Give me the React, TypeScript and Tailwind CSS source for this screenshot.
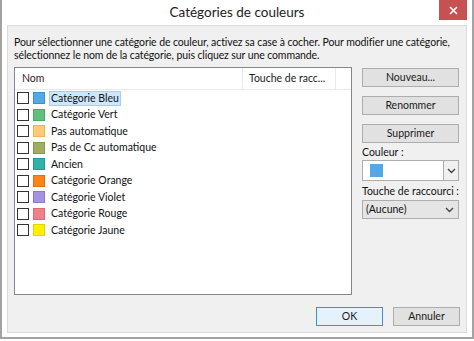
import React from "react";

const categories = [
  { name: "Catégorie Bleu", color: "#55a8e6", border: "#3f8fd0", selected: true },
  { name: "Catégorie Vert", color: "#62c07c", border: "#4ea867" },
  { name: "Pas automatique", color: "#ffc978", border: "#efb35c" },
  { name: "Pas de Cc automatique", color: "#a0ae62", border: "#8a984e" },
  { name: "Ancien", color: "#32b3aa", border: "#229a92" },
  { name: "Catégorie Orange", color: "#fe8419", border: "#e7700a" },
  { name: "Catégorie Violet", color: "#a592e0", border: "#8c78cc" },
  { name: "Catégorie Rouge", color: "#f2808a", border: "#dc6a74" },
  { name: "Catégorie Jaune", color: "#fff000", border: "#e6d400" },
];

const font = { fontFamily: 'Lato, "Noto Sans", sans-serif' };

function Btn({ children, primary }: { children: React.ReactNode; primary?: boolean }) {
  return (
    <button
      className={
        primary
          ? "h-[19px] w-[67px] border border-[#3c8fdc] bg-[#e5f1fb] text-[10.5px] leading-none text-[#1a1a1a]"
          : "h-[19px] w-[67px] border border-[#adadad] bg-[#e1e1e1] text-[10.5px] leading-none text-[#1a1a1a]"
      }
    >
      {children}
    </button>
  );
}

function SideBtn({ children }: { children: React.ReactNode }) {
  return (
    <button className="h-[19px] w-full border border-[#adadad] bg-[#e1e1e1] text-[10.5px] leading-none text-[#1a1a1a]">
      {children}
    </button>
  );
}

function Chevron() {
  return (
    <svg width="9" height="6" viewBox="0 0 9 6">
      <path d="M1 1 L4.5 4.5 L8 1" fill="none" stroke="#444" strokeWidth="1.4" />
    </svg>
  );
}

export default function App() {
  return (
    <div className="h-[341px] w-[474px] bg-white" style={font}>
      <div className="flex h-[339px] w-[474px] flex-col border-x-2 border-b-2 border-[#a3a3a3] bg-white px-[5px] pb-[4px]">
        {/* title bar */}
        <div className="relative flex h-[25px] shrink-0 items-center justify-center">
          <span className="text-[13.5px] leading-none text-[#222]">Catégories de couleurs</span>
          <div className="absolute right-[0px] top-0 flex h-[20px] w-[28px] items-center justify-center bg-[#c75050]">
            <svg width="9" height="9" viewBox="0 0 9 9">
              <path d="M1 1 L8 8 M8 1 L1 8" stroke="#fff" strokeWidth="1.6" />
            </svg>
          </div>
        </div>

        {/* panel */}
        <div className="flex flex-1 flex-col border border-[#dadada] bg-[#f0f0f0] px-[6px]">
          <p className="mt-[10px] whitespace-nowrap text-[10.5px] leading-[13px] tracking-[-0.1px] text-[#111]">
            Pour sélectionner une catégorie de couleur, activez sa case à cocher. Pour modifier une catégorie,
            <br />
            sélectionnez le nom de la catégorie, puis cliquez sur une commande.
          </p>

          <div className="mt-[5px] flex gap-[10px]">
            {/* list */}
            <div className="h-[228px] w-[338px] border border-[#828790] bg-white">
              <div className="flex h-[22px] whitespace-nowrap border-b border-[#eaeaea] text-[10.5px] text-[#1a1a1a]">
                <div className="flex w-[228px] items-center border-r border-[#eaeaea] pl-[7px] text-[#3a1a2a]">Nom</div>
                <div className="flex w-[93px] items-center border-r border-[#eaeaea] pl-[6px]">Touche de racc...</div>
              </div>
              <div>
                {categories.map((c) => (
                  <div key={c.name} className="flex h-[16.5px] items-center whitespace-nowrap">
                    <div className="ml-[2px] h-[12px] w-[12px] border border-[#333] bg-white" />
                    <div
                      className="ml-[4px] h-[12px] w-[12px] border"
                      style={{ background: c.color, borderColor: c.border }}
                    />
                    <span
                      className={
                        c.selected
                          ? "ml-[4px] border border-[#99d1ff] bg-[#cce8ff] px-[1px] text-[10.5px] leading-[13px] text-[#111]"
                          : "ml-[6px] text-[10.5px] leading-[13px] text-[#111]"
                      }
                    >
                      {c.name}
                    </span>
                  </div>
                ))}
              </div>
            </div>

            {/* right column */}
            <div className="flex w-[97px] flex-col whitespace-nowrap">
              <div className="mt-[1px] flex flex-col gap-[9px]">
                <SideBtn>Nouveau...</SideBtn>
                <SideBtn>Renommer</SideBtn>
                <SideBtn>Supprimer</SideBtn>
              </div>
              <div className="mt-[2px] text-[10.5px] leading-[14px] text-[#111]">Couleur :</div>
              <div className="mt-[1px] flex h-[21px] border border-[#adadad] bg-white">
                <div className="flex flex-1 items-center pl-[7px]">
                  <div className="h-[13px] w-[13px] bg-[#55a8e6]" />
                </div>
                <div className="flex w-[15px] items-center justify-center border-l border-[#adadad] bg-[#f0f0f0]">
                  <Chevron />
                </div>
              </div>
              <div className="mt-[3px] text-[10.5px] leading-[14px] text-[#111]">Touche de raccourci :</div>
              <div className="mt-[2px] flex h-[19px] items-center justify-between border border-[#adadad] bg-[#e5e5e5] pl-[3px] pr-[4px] text-[10.5px] text-[#111]">
                <span>(Aucune)</span>
                <Chevron />
              </div>
            </div>
          </div>

          <div className="mt-auto mb-[6px] flex justify-end gap-[10px]">
            <Btn primary>OK</Btn>
            <Btn>Annuler</Btn>
          </div>
        </div>
      </div>
    </div>
  );
}
